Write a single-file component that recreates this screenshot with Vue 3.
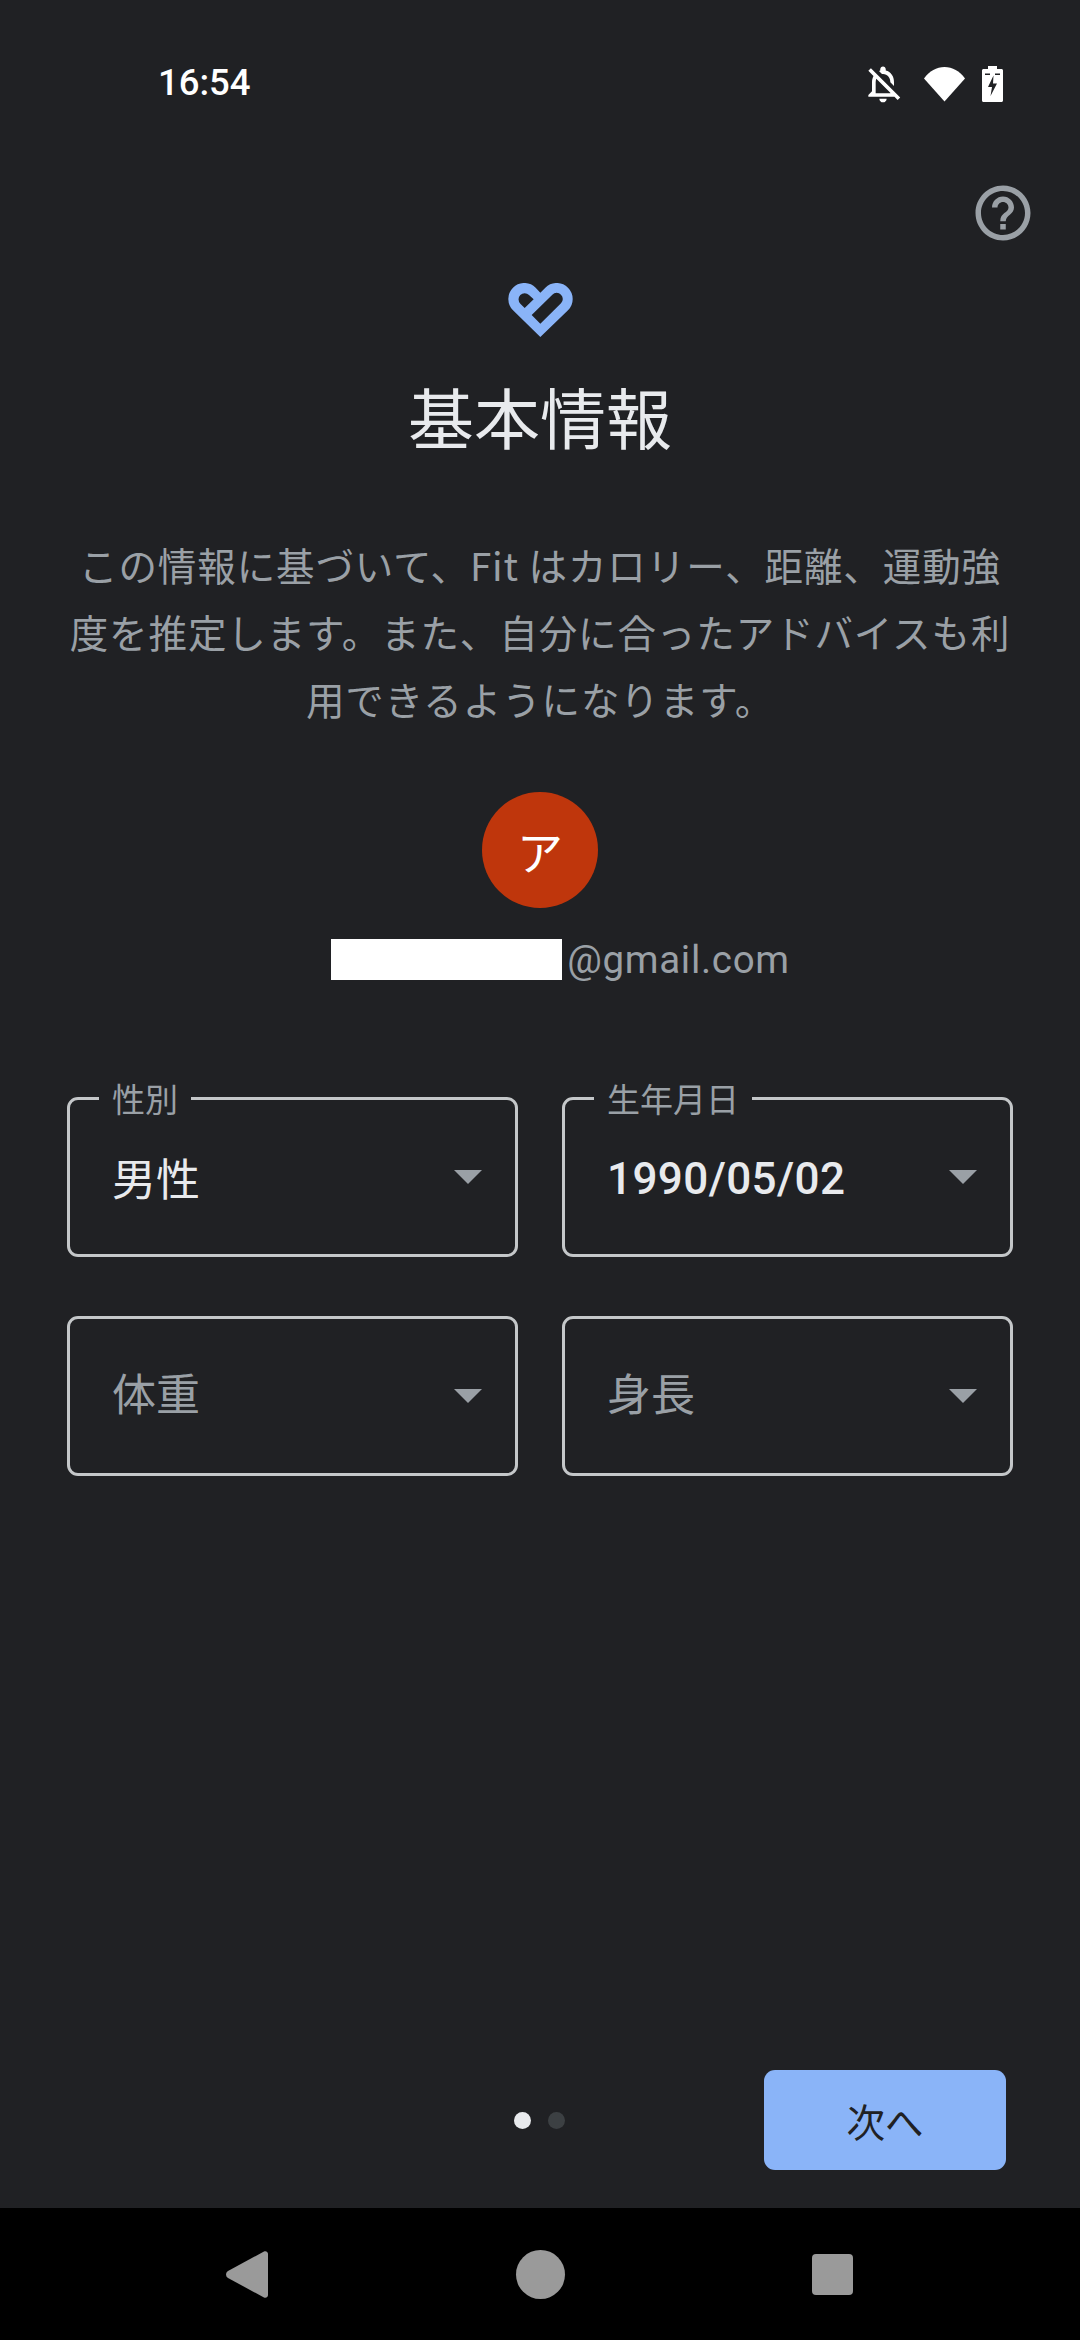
<template>
  <div class="screen">
    <div class="status-bar">
      <span class="clock">16:54</span>
      <div class="status-icons">
        <svg class="bell" viewBox="0 0 24 24"><path fill="#fff" d="M12 22c1.1 0 2-.9 2-2h-4c0 1.1.9 2 2 2zm0-15.500c2.490 0 4 2.020 4 4.500v.1l2 2V11c0-3.070-1.630-5.640-4.500-6.320V4c0-.83-.67-1.500-1.500-1.500s-1.500.67-1.500 1.500v.68c-.24.06-.47.15-.69.23l1.640 1.640c.18-.02.36-.05.55-.05zM5.410 3.350L4 4.760l2.810 2.810C6.290 8.570 6 9.740 6 11v5l-2 2v1h14.240l1.740 1.740 1.410-1.410L5.410 3.350zM16 17H8v-6c0-.68.12-1.320.34-1.900L16 16.760V17z"/></svg>
        <svg class="wifi" viewBox="0 0 41 35"><path fill="#fff" d="M20.500 34.500L0 11.500C5.500 4 12.500 0 20.500 0S35.500 4 41 11.500z"/></svg>
        <svg class="battery" viewBox="0 0 21 36">
          <path fill="#fff" d="M6 0h9v3h4.500c.8 0 1.500.7 1.500 1.500V34.500c0 .8-.7 1.500-1.500 1.500H1.500C.7 36 0 35.300 0 34.500V4.500C0 3.700.7 3 1.500 3H6z"/>
          <path fill="#202124" d="M3 7.500h5v1.500H3zM13 7.500h5v1.500h-5zM11.500 9.500L6 21h4l-1.500 9L15 17.500h-4z"/>
        </svg>
      </div>
    </div>

    <main class="content">
      <div class="help-row">
        <svg class="help" viewBox="0 0 24 24"><path fill="#9aa0a6" d="M11 18h2v-2h-2v2zm1-16C6.480 2 2 6.480 2 12s4.480 10 10 10 10-4.480 10-10S17.520 2 12 2zm0 18c-4.410 0-8-3.590-8-8s3.590-8 8-8 8 3.590 8 8-3.590 8-8 8zm0-14c-2.210 0-4 1.790-4 4h2c0-1.100.9-2 2-2s2 .9 2 2c0 2-3 1.750-3 5h2c0-2.250 3-2.500 3-5 0-2.210-1.790-4-4-4z"/></svg>
      </div>

      <svg class="logo" viewBox="382 68 193 162">
        <path fill="#8ab4f8" fill-rule="evenodd" d="M478 230L396 150A48 48 0 1 1 464 82L478 97L493 82A48 48 0 1 1 561 150ZM431 143L418 130A18 18 0 0 1 444 104L458 117ZM478 190L452 164L514 103A18 18 0 0 1 540 129Z"/>
      </svg>

      <h1 class="title">基本情報</h1>
      <p class="description">この情報に基づいて、Fit はカロリー、距離、運動強度を推定します。また、自分に合ったアドバイスも利用できるようになります。</p>

      <div class="avatar">ア</div>
      <div class="account">
        <span class="redacted"></span>
        <span class="email">@gmail.com</span>
      </div>

      <div class="fields">
        <div v-for="field in fields" :key="field.key" class="field">
          <span v-if="field.label" class="field-label">{{ field.label }}</span>
          <span :class="['field-value', { placeholder: !field.value, numeric: field.numeric }]">{{ field.value || field.placeholder }}</span>
          <span class="arrow"></span>
        </div>
      </div>

      <div class="footer">
        <div class="dots">
          <span class="dot active"></span>
          <span class="dot"></span>
        </div>
        <button class="next-btn">次へ</button>
      </div>
    </main>

    <nav class="nav-bar">
      <svg class="nav-back" viewBox="0 0 42 47"><path fill="#9a9a9a" d="M38 .5c2-.9 4 .5 4 2.500v41c0 2-2 3.400-4 2.500L2 27c-2.600-1.500-2.600-5.500 0-7z"/></svg>
      <span class="nav-home"></span>
      <span class="nav-recent"></span>
    </nav>
  </div>
</template>

<script setup>
const fields = [
  { key: 'gender', label: '性別', value: '男性' },
  { key: 'birth', label: '生年月日', value: '1990/05/02', numeric: true },
  { key: 'weight', placeholder: '体重' },
  { key: 'height', placeholder: '身長' }
]
</script>

<style>
html, body {
  margin: 0;
  background: #202124;
}
</style>

<style scoped>
.screen {
  width: 1080px;
  height: 2340px;
  display: flex;
  flex-direction: column;
  background: #202124;
  font-family: "Noto Sans CJK JP", "Noto Sans", sans-serif;
  overflow: hidden;
}

.status-bar {
  height: 166px;
  flex: none;
  box-sizing: border-box;
  padding: 62px 77px 0 158px;
  display: flex;
  justify-content: space-between;
  align-items: flex-start;
}

.clock {
  font-family: Roboto, sans-serif;
  font-weight: 500;
  font-size: 36.500px;
  line-height: 42px;
  color: #fff;
}

.status-icons {
  display: flex;
  align-items: center;
  gap: 17px;
  height: 44px;
}

.bell {
  width: 44px;
  height: 44px;
  margin-right: 2px;
}

.wifi {
  width: 41px;
  height: 35px;
}

.battery {
  width: 21px;
  height: 36px;
}

.content {
  flex: 1;
  display: flex;
  flex-direction: column;
  align-items: center;
  padding: 0 67px;
  min-height: 0;
}

.help-row {
  align-self: stretch;
  display: flex;
  justify-content: flex-end;
  margin-right: -23px;
}

.help {
  width: 66px;
  height: 66px;
  margin-top: 14px;
}

.logo {
  width: 65px;
  height: 54px;
  margin-top: 37px;
}

.title {
  margin: 33px 0 0;
  font-size: 66px;
  font-weight: 400;
  line-height: 90px;
  color: #e8eaed;
}

.description {
  margin: 71px 0 0;
  width: 946px;
  font-size: 38.500px;
  letter-spacing: 0.9px;
  line-height: 67px;
  text-align: center;
  color: #9aa0a6;
}

.avatar {
  width: 116px;
  height: 116px;
  margin-top: 60px;
  border-radius: 50%;
  background: #bf360c;
  color: #fff;
  font-size: 46px;
  display: flex;
  align-items: center;
  justify-content: center;
}

.account {
  display: flex;
  align-items: center;
  gap: 5px;
  margin-top: 31px;
  padding-left: 41px;
  height: 41px;
}

.redacted {
  width: 231px;
  height: 41px;
  background: #fff;
}

.email {
  font-family: Roboto, sans-serif;
  font-size: 38.500px;
  letter-spacing: 0.7px;
  color: #9aa0a6;
  line-height: 41px;
}

.fields {
  align-self: stretch;
  display: grid;
  grid-template-columns: 1fr 1fr;
  column-gap: 44px;
  row-gap: 59px;
  margin-top: 117px;
}

.field {
  position: relative;
  height: 160px;
  box-sizing: border-box;
  border: 3px solid #c4c7c9;
  border-radius: 11px;
  padding: 0 33px 0 42px;
  display: flex;
  align-items: center;
  justify-content: space-between;
}

.field-label {
  position: absolute;
  top: -21px;
  left: 29px;
  padding: 0 13px;
  background: #202124;
  font-size: 33px;
  line-height: 38px;
  color: #9aa0a6;
}

.field-value {
  font-size: 44px;
  line-height: 60px;
  color: #e8eaed;
}

.field-value.numeric {
  font-family: Roboto, sans-serif;
  font-weight: 500;
  font-size: 44px;
  letter-spacing: 0.4px;
  margin-top: 3px;
}

.field-value.placeholder {
  color: #9aa0a6;
  margin-top: -8px;
}

.arrow {
  width: 0;
  height: 0;
  border-left: 14px solid transparent;
  border-right: 14px solid transparent;
  border-top: 14px solid #9aa0a6;
}

.footer {
  margin-top: auto;
  margin-bottom: 38px;
  align-self: stretch;
  position: relative;
  display: flex;
  justify-content: flex-end;
  align-items: center;
  padding-right: 7px;
}

.dots {
  position: absolute;
  left: 447px;
  display: flex;
  gap: 17px;
}

.dot {
  width: 17px;
  height: 17px;
  border-radius: 50%;
  background: #3c4043;
}

.dot.active {
  background: #e8eaed;
}

.next-btn {
  width: 242px;
  height: 100px;
  border: none;
  border-radius: 11px;
  background: #8ab4f8;
  color: #202124;
  font-family: inherit;
  font-size: 38.500px;
  padding: 0;
}

.nav-bar {
  height: 132px;
  flex: none;
  background: #000;
  display: flex;
  align-items: center;
}

.nav-back {
  width: 42px;
  height: 47px;
  margin-left: 226px;
}

.nav-home {
  width: 49px;
  height: 49px;
  border-radius: 50%;
  background: #9a9a9a;
  margin-left: 248px;
}

.nav-recent {
  width: 41px;
  height: 41px;
  border-radius: 4px;
  background: #9a9a9a;
  margin-left: 247px;
}
</style>
